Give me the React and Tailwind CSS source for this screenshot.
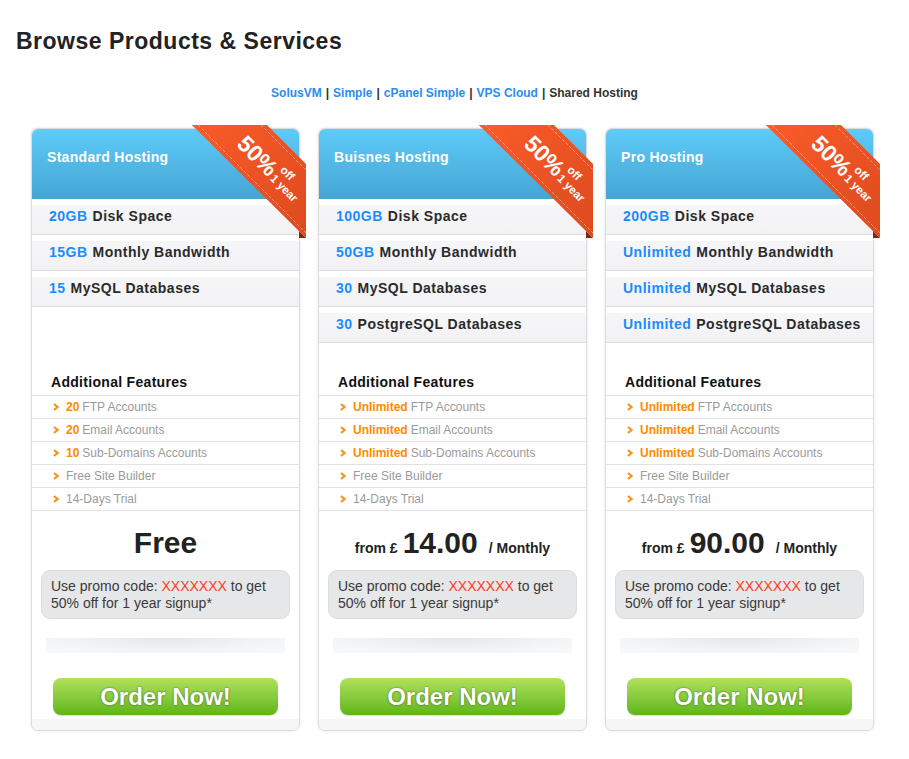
import React from "react";

const cards = [
  {
    title: "Standard Hosting",
    specs: [
      ["20GB", "Disk Space"],
      ["15GB", "Monthly Bandwidth"],
      ["15", "MySQL Databases"],
    ],
    features: [
      ["20", "FTP Accounts"],
      ["20", "Email Accounts"],
      ["10", "Sub-Domains Accounts"],
      [null, "Free Site Builder"],
      [null, "14-Days Trial"],
    ],
    price: null,
  },
  {
    title: "Buisnes Hosting",
    specs: [
      ["100GB", "Disk Space"],
      ["50GB", "Monthly Bandwidth"],
      ["30", "MySQL Databases"],
      ["30", "PostgreSQL Databases"],
    ],
    features: [
      ["Unlimited", "FTP Accounts"],
      ["Unlimited", "Email Accounts"],
      ["Unlimited", "Sub-Domains Accounts"],
      [null, "Free Site Builder"],
      [null, "14-Days Trial"],
    ],
    price: "14.00",
  },
  {
    title: "Pro Hosting",
    specs: [
      ["200GB", "Disk Space"],
      ["Unlimited", "Monthly Bandwidth"],
      ["Unlimited", "MySQL Databases"],
      ["Unlimited", "PostgreSQL Databases"],
    ],
    features: [
      ["Unlimited", "FTP Accounts"],
      ["Unlimited", "Email Accounts"],
      ["Unlimited", "Sub-Domains Accounts"],
      [null, "Free Site Builder"],
      [null, "14-Days Trial"],
    ],
    price: "90.00",
  },
];

function Ribbon({ id }) {
  return (
    <svg
      className="absolute top-[-5px] right-[-7px] z-10 overflow-visible"
      width="117"
      height="117"
      viewBox="0 0 117 117"
    >
      <defs>
        <linearGradient id={`rg${id}`} x1="0" y1="0" x2="1" y2="1">
          <stop offset="0" stopColor="#fb5b29" />
          <stop offset="1" stopColor="#dc4a1f" />
        </linearGradient>
      </defs>
      <polygon points="3,1 12,1 9,6" fill="#7d2811" />
      <polygon points="110,107 117,114 110,114" fill="#7d2811" />
      <polygon points="3,1 78,1 117,40 117,114" fill={`url(#rg${id})`} />
      <line x1="9" y1="1" x2="117" y2="109" stroke="rgba(255,255,255,0.55)" strokeWidth="0.8" strokeDasharray="3 2" />
      <line x1="72" y1="1" x2="117" y2="46" stroke="rgba(255,255,255,0.55)" strokeWidth="0.8" strokeDasharray="3 2" />
      <g transform="rotate(45)" fill="#ffffff" fontFamily="'Liberation Sans', Arial, sans-serif" fontWeight="700">
        <text x="48" y="-18" fontSize="23">50%</text>
        <text x="97" y="-31" fontSize="11.5">off</text>
        <text x="96" y="-18" fontSize="11.5">1 year</text>
      </g>
    </svg>
  );
}

function Chevron() {
  return (
    <svg width="6" height="8" viewBox="0 0 6 8" className="shrink-0">
      <polyline points="1,1 4.5,4 1,7" fill="none" stroke="#f7941d" strokeWidth="2.2" />
    </svg>
  );
}

function Card({ card, idx }) {
  return (
    <div className="relative w-[269px] rounded-[7px] border border-[#dcdcdc] bg-white shadow-[0_0_3px_rgba(0,0,0,0.1)]">
      <Ribbon id={idx} />
      <div className="h-[70px] rounded-t-[6px] bg-gradient-to-b from-[#5ecbf9] to-[#45a5d3] pl-[15px] pt-[19px]">
        <div className="text-[14px] font-bold leading-[18px] tracking-[0.3px] text-white">{card.title}</div>
      </div>
      <div className="h-[144px]">
        {card.specs.map(([v, l], i) => (
          <div
            key={i}
            className="flex h-[36px] items-center border-b border-[#dedede] bg-[linear-gradient(to_bottom,#ffffff_0%,#ffffff_16%,#f6f6f8_18%,#f2f2f4_100%)] pl-[17px] text-[14px] font-bold tracking-[0.5px] text-[#2a2a2a]"
          >
            <span className="text-[#1a8cff]">{v}</span>
            <span className="ml-[5px]">{l}</span>
          </div>
        ))}
      </div>
      <div className="flex h-[53px] items-end border-b border-[#e2e2e2] pb-[5px] pl-[19px] text-[14px] font-bold leading-[16px] tracking-[0.3px] text-[#111]">
        Additional Features
      </div>
      {card.features.map(([v, l], i) => (
        <div key={i} className="flex h-[23px] items-center border-b border-[#e2e2e2] pl-[21px] text-[12px] text-[#9a9a9a]">
          <Chevron />
          <span className="ml-[7px]">
            {v && <span className="mr-[3px] font-bold text-[#ff8a00]">{v}</span>}
            {l}
          </span>
        </div>
      ))}
      <div className="flex h-[34px] mt-[15px] items-baseline justify-center leading-[34px] text-[#222]">
        {card.price ? (
          <>
            <span className="text-[14px] font-bold">from £</span>
            <span className="ml-[5px] mr-[11px] text-[30px] font-bold">{card.price}</span>
            <span className="text-[14px] font-bold">/ Monthly</span>
          </>
        ) : (
          <span className="text-[30px] font-bold">Free</span>
        )}
      </div>
      <div className="mx-[9px] mt-[10px] flex h-[49px] items-center rounded-[9px] border border-[#dcdddf] bg-[#e6e7e9] px-[9px] text-[14px] leading-[17px] text-[#3a3a3a]">
        <div>
          Use promo code: <span className="text-[#ff3c1e]">XXXXXXX</span> to get
          <br />
          50% off for 1 year signup*
        </div>
      </div>
      <div className="mx-[14px] mt-[19px] h-[15px] bg-[radial-gradient(ellipse_at_top,#e6e6e8_0%,#f2f3f5_55%,#f8f9fb_100%)]" />
      <div className="mx-[21px] mt-[25px] flex h-[37px] items-center justify-center rounded-[8px] bg-gradient-to-b from-[#b0e15c] to-[#5eb613] shadow-[0_1px_1px_rgba(0,0,0,0.15)]">
        <span className="text-[24px] font-bold text-white [text-shadow:0_0_2px_rgba(0,0,0,0.6)]">Order Now!</span>
      </div>
      <div className="mt-[4px] h-[11px] rounded-b-[6px] bg-[#f5f6f8]" />
    </div>
  );
}

export default function App() {
  return (
    <div className="min-h-[759px] w-full bg-white font-['Liberation_Sans',Arial,sans-serif]">
      <h1 className="pl-[16px] pt-[28px] text-[23px] font-bold leading-[26px] tracking-[0.5px] text-[#222]">
        Browse Products &amp; Services
      </h1>
      <div className="mt-[32px] flex justify-center text-[12px] font-bold leading-[14px] text-[#333]">
        <span className="text-[#2a8cf2]">SolusVM</span>
        <span className="mx-[4px]">|</span>
        <span className="text-[#2a8cf2]">Simple</span>
        <span className="mx-[4px]">|</span>
        <span className="text-[#2a8cf2]">cPanel Simple</span>
        <span className="mx-[4px]">|</span>
        <span className="text-[#2a8cf2]">VPS Cloud</span>
        <span className="mx-[4px]">|</span>
        <span>Shared Hosting</span>
      </div>
      <div className="mt-[28px] flex gap-[18px] pl-[31px]">
        {cards.map((c, i) => (
          <Card key={i} card={c} idx={i} />
        ))}
      </div>
    </div>
  );
}
